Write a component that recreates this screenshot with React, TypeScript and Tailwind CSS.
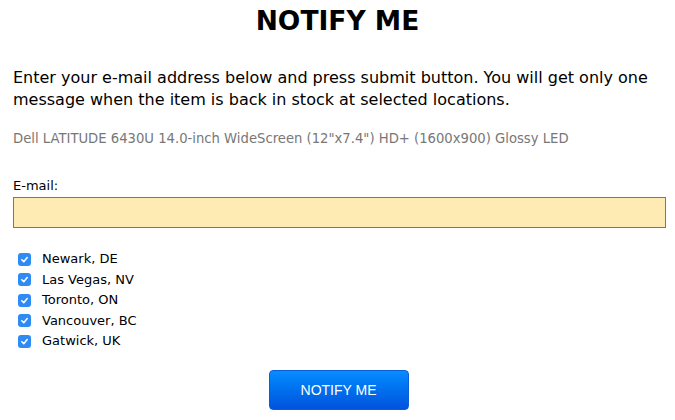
import React from "react";

const locations = ["Newark, DE", "Las Vegas, NV", "Toronto, ON", "Vancouver, BC", "Gatwick, UK"];

function Check() {
  return (
    <span className="flex h-[13px] w-[13px] items-center justify-center rounded-[3px] bg-[#2f8bf4]">
      <svg width="9" height="9" viewBox="0 0 10 10" fill="none">
        <path d="M2 5.3 L4.2 7.4 L8 2.8" stroke="white" strokeWidth="1.7" strokeLinecap="round" strokeLinejoin="round" />
      </svg>
    </span>
  );
}

export default function App() {
  return (
    <div className="h-[420px] w-[675px] bg-white px-[13px] text-black [font-family:'DejaVu_Sans',Verdana,sans-serif]">
      <h1 className="pt-[5px] text-center text-[26.5px] font-bold leading-[32px]">NOTIFY ME</h1>
      <p className="mt-[30px] text-[16px] leading-[22px]">
        Enter your e-mail address below and press submit button. You will get only one message when the item is back in stock at selected locations.
      </p>
      <p className="mt-[20px] text-[13.2px] leading-[16px] text-[#777]">
        Dell LATITUDE 6430U 14.0-inch WideScreen (12"x7.4") HD+ (1600x900) Glossy LED
      </p>
      <div className="mt-[31px] text-[13px] leading-[16px]">E-mail:</div>
      <input type="text" className="mt-[3px] block h-[31px] w-[653px] border border-[#6b7b86] bg-[#feebb3] outline-none" />
      <div className="mt-[23px] flex flex-col gap-[4.5px] pl-[5px]">
        {locations.map((l) => (
          <label key={l} className="flex items-center gap-[11px] text-[13px] leading-[16px]">
            <Check />
            <span>{l}</span>
          </label>
        ))}
      </div>
      <div className="mt-[21px] flex justify-center pl-[2px]">
        <button className="h-[40px] w-[140px] rounded-[4px] border border-[#0a5ed8] bg-gradient-to-b from-[#0a8cff] to-[#0052dc] text-[14px] text-white [font-family:'Liberation_Sans',Arial,sans-serif]">
          NOTIFY ME
        </button>
      </div>
    </div>
  );
}
